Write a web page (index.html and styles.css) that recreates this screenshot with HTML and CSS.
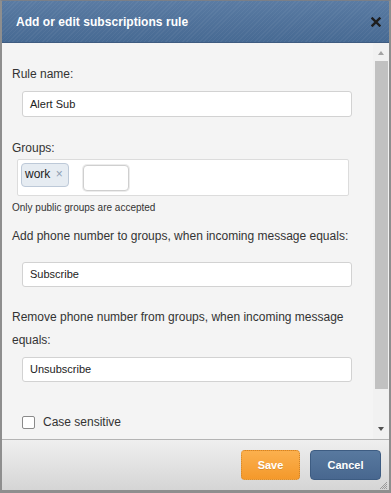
FILE: index.html
```html
<!DOCTYPE html>
<html>
<head>
<meta charset="utf-8">
<link rel="stylesheet" href="styles.css">
</head>
<body>
<div class="dialog">
  <div class="header">
    <span class="title">Add or edit subscriptions rule</span>
    <svg class="close" width="10" height="10" viewBox="0 0 10 10"><path d="M1.5 1.5 L8.5 8.5 M8.5 1.5 L1.5 8.5" stroke="#1e1e1e" stroke-width="2.4" stroke-linecap="square"/></svg>
  </div>
  <div class="body">
    <div class="content">
      <div class="label l-rule">Rule name:</div>
      <div class="input in-rule">Alert Sub</div>
      <div class="label l-groups">Groups:</div>
      <div class="groupbox">
        <span class="tag">work <span class="tag-x">×</span></span>
        <span class="mini"></span>
      </div>
      <div class="hint">Only public groups are accepted</div>
      <div class="label l-add">Add phone number to groups, when incoming message equals:</div>
      <div class="input in-add">Subscribe</div>
      <div class="label l-remove">Remove phone number from groups, when incoming message equals:</div>
      <div class="input in-remove">Unsubscribe</div>
      <div class="check-row"><span class="checkbox"></span><span>Case sensitive</span></div>
    </div>
    <div class="scrollbar">
      <div class="arrow up"></div>
      <div class="thumb"></div>
      <div class="track-rest"></div>
      <div class="arrow down"></div>
    </div>
  </div>
  <div class="footer">
    <button class="btn save">Save</button>
    <button class="btn cancel">Cancel</button>
    <svg class="grip" width="10" height="10" viewBox="0 0 10 10"><path d="M9 2 L2 9 M9 4 L4 9 M9 6 L6 9 M9 8 L8 9" stroke="#9a9a9a" stroke-width="1"/></svg>
  </div>
</div>
</body>
</html>
```
FILE: styles.css
```css
* { box-sizing: border-box; }
html, body { margin: 0; padding: 0; }
body {
  width: 391px;
  height: 493px;
  overflow: hidden;
  background: #8c8c8c;
  font-family: "Liberation Sans", Arial, sans-serif;
  color: #333;
}
.dialog {
  width: 391px;
  height: 493px;
  border-top: 1px solid #7a7f88;
  border-left: 2px solid #8e8e8e;
  border-right: 2px solid #8e8e8e;
  border-bottom: 3px solid #8e8e8e;
  display: flex;
  flex-direction: column;
  position: relative;
}
.header {
  height: 42px;
  flex: none;
  display: flex;
  align-items: center;
  justify-content: space-between;
  padding: 0 8px 0 14px;
  border-bottom: 1px solid #3e5b80;
  background:
    repeating-linear-gradient(135deg, rgba(255,255,255,0.045) 0 1px, rgba(255,255,255,0) 1px 3px),
    linear-gradient(#5a7ba3, #476a93);
}
.title {
  color: #fff;
  font-weight: bold;
  font-size: 12px;
  letter-spacing: 0.05px;
  margin-top: 1px;
}
.close { display: block; margin-top: 0; }
.body {
  flex: none;
  height: 396px;
  display: flex;
  background: #f4f4f4;
  overflow: hidden;
}
.content {
  flex: 1;
  padding: 20px 0 0 10px;
  font-size: 12px;
}
.label {
  line-height: 22px;
  font-size: 12px;
  color: #333;
}
.input {
  margin-left: 10px;
  width: 330px;
  height: 26px;
  background: #fff;
  border: 1px solid #d2d2d2;
  border-radius: 3px;
  font-size: 11px;
  line-height: 24px;
  padding-left: 7px;
  color: #222;
}
.in-rule { margin-top: 6px; }
.l-groups { margin-top: 20px; }
.groupbox {
  margin-left: 5px;
  width: 332px;
  height: 37px;
  background: #fff;
  border: 1px solid #dcdcdc;
  border-radius: 2px;
  padding: 3px 0 0 3px;
  display: flex;
  align-items: flex-start;
  gap: 14px;
}
.tag {
  width: 48px;
  height: 24px;
  background: #e6ecf2;
  border: 1px solid #bdc9d8;
  border-radius: 4px;
  font-size: 12px;
  line-height: 21px;
  padding-left: 3px;
  color: #222;
  white-space: nowrap;
}
.tag-x { color: #8d9eb2; font-size: 12px; margin-left: 2px; }
.mini {
  margin-top: 2px;
  width: 46px;
  height: 26px;
  background: #fff;
  border: 1px solid #cfcfcf;
  border-radius: 4px;
  box-shadow: 0 0 0 1px #ececec;
}
.hint {
  margin-top: 5px;
  font-size: 10px;
  line-height: 14px;
  color: #333;
}
.l-add { margin-top: 10px; }
.in-add { margin-top: 15px; height: 25px; line-height: 23px; }
.l-remove { margin-top: 19px; line-height: 22.5px; width: 350px; }
.in-remove { margin-top: 6px; height: 25px; line-height: 23px; }
.check-row {
  margin-top: 29px;
  margin-left: 10px;
  display: flex;
  align-items: center;
  gap: 8px;
  line-height: 22px;
  font-size: 12px;
}
.checkbox {
  width: 13px;
  height: 13px;
  border: 1px solid #8a8a8a;
  border-radius: 2px;
  background: #fff;
}
.scrollbar {
  width: 16px;
  flex: none;
  background: #f1f1f1;
  display: flex;
  flex-direction: column;
  align-items: center;
}
.arrow {
  width: 0;
  height: 0;
  border-left: 3.5px solid transparent;
  border-right: 3.5px solid transparent;
  flex: none;
}
.arrow.up { margin-top: 8px; border-bottom: 4px solid #a3a3a3; }
.thumb {
  margin-top: 6px;
  width: 13px;
  margin-left: 1px;
  height: 328px;
  background: #c1c1c1;
  flex: none;
}
.track-rest { flex: 1; }
.arrow.down { margin-bottom: 8px; border-top: 4px solid #505050; }
.footer {
  flex: 1;
  border-top: 1px solid #b4b4b4;
  background: linear-gradient(#efefef, #d5d5d5);
  display: flex;
  justify-content: flex-end;
  align-items: flex-start;
  gap: 10px;
  padding: 10px 8px 0 0;
  position: relative;
}
.btn {
  height: 30px;
  font-family: "Liberation Sans", Arial, sans-serif;
  font-weight: bold;
  font-size: 11px;
  color: #fff;
  border-radius: 4px;
  padding: 0;
  text-shadow: 0 1px 0 rgba(0,0,0,0.12);
}
.save {
  width: 59px;
  background: linear-gradient(#fbb04e, #f4992b);
  border: 1px dotted #d0842a;
}
.cancel {
  width: 71px;
  background: linear-gradient(#58799f, #48678f);
  border: 1px solid #3d5c82;
}
.grip { position: absolute; right: 1px; bottom: 0; }
```
